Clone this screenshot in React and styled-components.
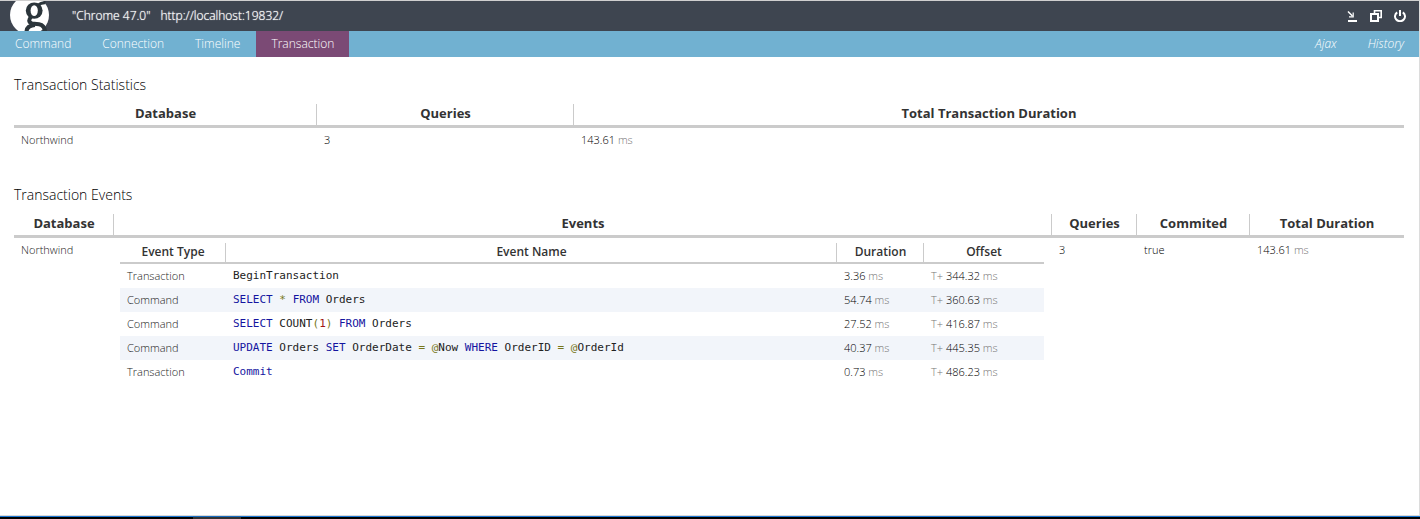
import React from 'react'
import styled, { createGlobalStyle } from 'styled-components'

const stats = [{ database: 'Northwind', queries: 3, duration: '143.61' }]

const events = [
    { type: 'Transaction', name: [['', 'BeginTransaction']], duration: '3.36', offset: '344.32' },
    { type: 'Command', name: [['kwd', 'SELECT'], ['pun', ' * '], ['kwd', 'FROM'], ['', ' Orders']], duration: '54.74', offset: '360.63' },
    { type: 'Command', name: [['kwd', 'SELECT'], ['', ' COUNT'], ['pun', '('], ['lit', '1'], ['pun', ') '], ['kwd', 'FROM'], ['', ' Orders']], duration: '27.52', offset: '416.87' },
    { type: 'Command', name: [['kwd', 'UPDATE'], ['', ' Orders '], ['kwd', 'SET'], ['', ' OrderDate '], ['pun', '= @'], ['', 'Now '], ['kwd', 'WHERE'], ['', ' OrderID '], ['pun', '= @'], ['', 'OrderId']], duration: '40.37', offset: '445.35' },
    { type: 'Transaction', name: [['kwd', 'Commit']], duration: '0.73', offset: '486.23' },
]

const tokenColors = { kwd: '#1414a0', pun: '#77771a', lit: '#a01414' }

function Code({ tokens }) {
    return (
        <CodeText>
            {tokens.map(([kind, text], i) => <Token key={i} $kind={kind}>{text}</Token>)}
        </CodeText>
    )
}

function Header() {
    return (
        <TopBar>
            <Logo viewBox="0 0 40 30" aria-hidden="true">
                <circle cx="19.5" cy="14" r="19.5" fill="#fff" />
                <ellipse cx="24.2" cy="9.6" rx="8.4" ry="8.2" fill="#2b353b" />
                <ellipse cx="24.2" cy="9.6" rx="3.6" ry="5.4" fill="#fff" />
                <path d="M28 4.5 Q31 1.6 35.5 1.8" fill="none" stroke="#2b353b" strokeWidth="3" />
                <path d="M21 16 Q17 20.5 22 22.6 L29 23.2 Q35 24.5 35 31" fill="none" stroke="#2b353b" strokeWidth="4" />
                <path d="M25 24 Q16.5 24.5 16.5 31" fill="none" stroke="#2b353b" strokeWidth="4" />
            </Logo>
            <Request>
                <span>"Chrome 47.0"</span>
                <span>http://localhost:19832/</span>
            </Request>
            <Actions>
                <IconButton type="button" aria-label="Minimize">
                    <svg width="12" height="12" viewBox="0 0 12 12" fill="none" stroke="#fff">
                        <path d="M2 1.5 L6.5 6" strokeWidth="1.5" />
                        <path d="M7.2 2.5 V6.8 H3" strokeWidth="1.2" />
                        <path d="M2 11 H11" strokeWidth="2" />
                    </svg>
                </IconButton>
                <IconButton type="button" aria-label="Open in new window">
                    <svg width="12" height="12" viewBox="0 0 12 12" fill="none" stroke="#fff" strokeWidth="2">
                        <path d="M1 4 H8 V11 H1 Z" />
                        <path d="M4.5 4 V0.8 H11.2 V7.5 H8" strokeWidth="1.6" />
                    </svg>
                </IconButton>
                <IconButton type="button" aria-label="Close">
                    <svg width="12" height="12" viewBox="0 0 12 12" fill="none" stroke="#fff" strokeWidth="2">
                        <path d="M3.2 2.4 A5 4.8 0 1 0 8.8 2.4" />
                        <path d="M6 0 V6" />
                    </svg>
                </IconButton>
            </Actions>
        </TopBar>
    )
}

function App() {
    return (
        <Page>
            <GlobalStyle />
            <Header />
            <Tabs>
                <Tab href="#command">Command</Tab>
                <Tab href="#connection">Connection</Tab>
                <Tab href="#timeline">Timeline</Tab>
                <Tab href="#transaction" $active>Transaction</Tab>
                <Spacer />
                <Tab href="#ajax" $italic>Ajax</Tab>
                <Tab href="#history" $italic>History</Tab>
            </Tabs>

            <Panel>
                <Title>Transaction Statistics</Title>
                <Table>
                    <colgroup>
                        <Col $width="303px" />
                        <Col $width="257px" />
                        <Col />
                    </colgroup>
                    <thead>
                        <tr>
                            <HeadCell>Database</HeadCell>
                            <HeadCell>Queries</HeadCell>
                            <HeadCell>Total Transaction Duration</HeadCell>
                        </tr>
                    </thead>
                    <tbody>
                        {stats.map((s) => (
                            <tr key={s.database}>
                                <Cell $soft>{s.database}</Cell>
                                <Cell>{s.queries}</Cell>
                                <Cell>{s.duration} <Muted>ms</Muted></Cell>
                            </tr>
                        ))}
                    </tbody>
                </Table>

                <Title>Transaction Events</Title>
                <Table>
                    <colgroup>
                        <Col $width="100px" />
                        <Col />
                        <Col $width="85px" />
                        <Col $width="113px" />
                        <Col $width="154px" />
                    </colgroup>
                    <thead>
                        <tr>
                            <HeadCell>Database</HeadCell>
                            <HeadCell>Events</HeadCell>
                            <HeadCell>Queries</HeadCell>
                            <HeadCell>Commited</HeadCell>
                            <HeadCell>Total Duration</HeadCell>
                        </tr>
                    </thead>
                    <tbody>
                        <tr>
                            <Cell $soft>Northwind</Cell>
                            <NestedCell>
                                <Table>
                                    <colgroup>
                                        <Col $width="106px" />
                                        <Col />
                                        <Col $width="87px" />
                                        <Col $width="120px" />
                                    </colgroup>
                                    <thead>
                                        <tr>
                                            <SubHeadCell>Event Type</SubHeadCell>
                                            <SubHeadCell>Event Name</SubHeadCell>
                                            <SubHeadCell>Duration</SubHeadCell>
                                            <SubHeadCell>Offset</SubHeadCell>
                                        </tr>
                                    </thead>
                                    <tbody>
                                        {events.map((e, i) => (
                                            <EventRow key={i}>
                                                <Cell $soft>{e.type}</Cell>
                                                <Cell><Code tokens={e.name} /></Cell>
                                                <Cell>{e.duration} <Muted>ms</Muted></Cell>
                                                <Cell><Muted>T+</Muted> {e.offset} <Muted>ms</Muted></Cell>
                                            </EventRow>
                                        ))}
                                    </tbody>
                                </Table>
                            </NestedCell>
                            <Cell>3</Cell>
                            <Cell>true</Cell>
                            <Cell>143.61 <Muted>ms</Muted></Cell>
                        </tr>
                    </tbody>
                </Table>
            </Panel>
            <TaskBar><TaskItem /></TaskBar>
        </Page>
    )
}

export default App

const GlobalStyle = createGlobalStyle`
    * {
        box-sizing: border-box;
    }

    body {
        margin: 0;
        background: #fff;
        color: #333;
        font-family: "Open Sans", "Noto Sans", sans-serif;
    }
`

const Page = styled.div`
    display: flex;
    flex-direction: column;
    min-height: 100vh;
`

const TopBar = styled.header`
    display: flex;
    height: 31px;
    align-items: center;
    padding: 0 13px 0 10px;
    background: #3e4550;
    border-top: 1px solid #cfcfcf;
    border-right: 1px solid #dcdcdc;
`

const Logo = styled.svg`
    width: 40px;
    height: 30px;
`

const Request = styled.div`
    display: flex;
    flex: 1;
    gap: 10px;
    margin-left: 22px;
    color: #fff;
    font-size: 12px;
    font-weight: 300;
    line-height: 30px;
    text-shadow: 0 0 1px #fff;
`

const Actions = styled.div`
    display: flex;
    gap: 12px;
`

const IconButton = styled.button`
    display: flex;
    padding: 0;
    border: none;
    background: none;
    cursor: pointer;
`

const Tabs = styled.nav`
    display: flex;
    gap: 1px;
    height: 26px;
    background: #71b1d1;
    border-right: 1px solid #dcdcdc;
`

const Tab = styled.a`
    padding: 0 15px;
    background: ${(p) => (p.$active ? '#7b4a75' : 'none')};
    color: #fff;
    font-size: 12px;
    font-style: ${(p) => (p.$italic ? 'italic' : 'normal')};
    font-weight: 300;
    line-height: 25px;
    text-decoration: none;
`

const Spacer = styled.div`
    flex: 1;
`

const Panel = styled.main`
    flex: 1;
    padding: 17px 15px 0 14px;
    border-right: 1px solid #dcdcdc;
`

const Title = styled.h1`
    margin: 0 0 8px;
    color: #000;
    font-size: 14px;
    font-weight: 300;
    line-height: 22px;

    table + & {
        margin-top: 32px;
    }
`

const Table = styled.table`
    width: 100%;
    table-layout: fixed;
    border-collapse: separate;
    border-spacing: 0;
`

const Col = styled.col`
    width: ${(p) => p.$width || 'auto'};
`

const HeadCell = styled.th`
    height: 24px;
    padding: 0 0 3px;
    border-bottom: 3px solid #cbcbcb;
    background: linear-gradient(#cbcbcb, #cbcbcb) right / 1px 100% no-repeat;
    font-size: 13px;
    font-weight: 700;
    line-height: 18px;

    &:last-child {
        background: none;
    }
`

const SubHeadCell = styled(HeadCell)`
    height: 21px;
    padding: 0 0 1px;
    border-bottom-width: 2px;
    font-size: 12px;
    font-weight: 600;
`

const Cell = styled.td`
    height: 24px;
    padding: 0 7px;
    color: ${(p) => (p.$soft ? '#222' : '#000')};
    font-size: 11px;
    font-weight: 300;
    line-height: 24px;
    vertical-align: top;
    white-space: nowrap;
`

const NestedCell = styled.td`
    padding: 5px 8px 5px 6px;
`

const EventRow = styled.tr`
    &:nth-child(even) {
        background: #f2f5fa;
    }
`

const Muted = styled.span`
    color: #777;
`

const CodeText = styled.code`
    display: block;
    font-family: "DejaVu Sans Mono", monospace;
    font-size: 11px;
    font-weight: 400;
    line-height: 24px;
    white-space: pre;
`

const Token = styled.span`
    color: ${(p) => tokenColors[p.$kind] || '#222'};
`

const TaskBar = styled.footer`
    height: 4px;
    padding-left: 193px;
    background: #000;
    border-top: 1px solid #d9d9d9;
    box-shadow: inset 0 1px #1976d2;
`

const TaskItem = styled.div`
    width: 48px;
    height: 3px;
    background: #333;
    box-shadow: inset 0 1px #176cbf;
`
